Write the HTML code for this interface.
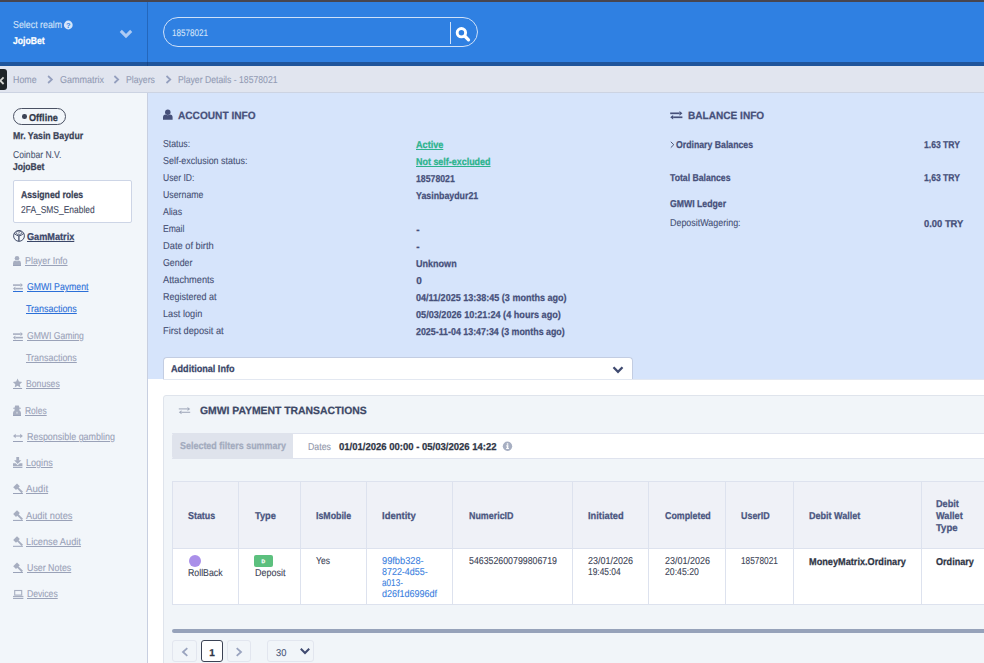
<!DOCTYPE html>
<html lang="en">
<head>
<meta charset="utf-8">
<title>Player Details - 18578021</title>
<style>
html,body{margin:0;padding:0}
body{width:984px;height:663px;overflow:hidden;position:relative;background:#fff;font-family:"Liberation Sans",sans-serif;font-size:10px;color:#4a5578}
.abs,.t,svg.i{position:absolute}
.t{white-space:nowrap;text-rendering:geometricPrecision;transform-origin:0 0;text-decoration-thickness:1px;text-underline-offset:1px}
a.t{cursor:pointer}
.topstrip{left:0;top:0;width:984px;height:2px;background:#47454f}
.header{left:0;top:2px;width:984px;height:60px;background:#2f80e2;border-bottom:4px solid #1f559b}
.hdiv{left:147px;top:2px;width:1px;height:64px;background:rgba(10,40,90,.28)}
.pill{left:163px;top:17px;width:313px;height:28px;border:1px solid #cfe1f9;border-radius:15px}
.pdiv{left:450px;top:22px;width:1px;height:22px;background:#cfe1f9}
.crumbs{left:0;top:66px;width:984px;height:26px;background:#e1e5ef;border-bottom:1px solid #ccd3e2}
.collapse{left:0;top:69px;width:7px;height:21px;background:#1f2428;border-radius:0 3px 3px 0}
.side{left:0;top:93px;width:147px;height:570px;background:#f2f6fa;border-right:1px solid #c8cfe0}
.offline{left:13px;top:108px;width:51px;height:15px;border:1px solid #4a5163;border-radius:9px}
.dot{left:22.1px;top:114.2px;width:4.6px;height:4.6px;border-radius:50%;background:#3b4254}
.roles{left:13px;top:180px;width:117px;height:41px;border:1px solid #cdd5e6;border-radius:2px;background:#fff}
.ul{height:1px}
.acct{left:148px;top:93px;width:836px;height:286px;background:#d6e4fb}
.acctline{left:163px;top:379px;width:821px;height:1px;background:#e3e8f1}
.addl{left:163px;top:357px;width:468px;height:22px;background:#fff;border:1px solid #c3cde2;border-bottom:0;border-radius:4px 4px 0 0}
.panel{left:163px;top:395px;width:840px;height:300px;background:#f1f5f9;border:1px solid #dfe4ec;border-radius:3px}
.fbar{left:172px;top:433px;width:830px;height:24px;background:#fff;border-top:1px solid #dfe3ee;border-bottom:1px solid #dfe3ee}
.flabel{left:172px;top:433px;width:121px;height:26px;background:#dfe3ec;border-radius:3px 0 0 3px}
table.grid{left:172px;top:481px;border-collapse:collapse;table-layout:fixed;width:900px}
table.grid th,table.grid td{border:1px solid #dde2ee;padding:0}
table.grid th{height:66px;background:#eff1f7}
table.grid td{height:55px;background:#fff}
.circle{left:189px;top:554.7px;width:12px;height:12px;border-radius:50%;background:#aa8fe9}
.badge{left:254px;top:555px;width:19px;height:12px;border-radius:2px;background:#5cc07e}
.sbar{left:172px;top:629px;width:830px;height:4px;background:#96a2ba;border-radius:2px}
.pg{top:640px;height:20px;border:1px solid #e2e6ef;border-radius:3px;background:#f1f5f9}
.pg.cur{border-color:#3b4254;background:#fff}
</style>
</head>
<body>
<div class="abs topstrip"></div>
<div class="abs header"></div>
<div class="abs hdiv"></div>
<div class="abs pill"></div>
<div class="abs pdiv"></div>
<div class="abs crumbs"></div>
<div class="abs collapse"></div>
<div class="abs side"></div>
<div class="abs offline"></div><div class="abs dot"></div>
<div class="abs roles"></div>
<div class="abs acct"></div>
<div class="abs addl"></div><div class="abs acctline"></div>
<div class="abs panel"></div>
<div class="abs fbar"></div><div class="abs flabel"></div>
<table class="abs grid">
<colgroup><col style="width:66px"><col style="width:62px"><col style="width:66px"><col style="width:86px"><col style="width:120px"><col style="width:76px"><col style="width:77px"><col style="width:68px"><col style="width:128px"><col style="width:151px"></colgroup>
<tr><th></th><th></th><th></th><th></th><th></th><th></th><th></th><th></th><th></th><th></th></tr>
<tr><td></td><td></td><td></td><td></td><td></td><td></td><td></td><td></td><td></td><td></td></tr>
</table>
<div class="abs circle"></div>
<div class="abs badge"></div>
<div class="abs sbar"></div>
<div class="abs pg" style="left:172px;width:23px"></div>
<div class="abs pg cur" style="left:201px;width:20px"></div>
<div class="abs pg" style="left:227px;width:22px"></div>
<div class="abs pg" style="left:267px;width:45px"></div>
<svg class="i" style="left:0;top:0;pointer-events:none" width="984" height="663" viewBox="0 0 984 663" font-family="Liberation Sans, sans-serif">
<circle cx="68.3" cy="25" r="4.4" fill="#d6e5fa"/><text x="68.3" y="27.6" font-size="7.5" font-weight="700" text-anchor="middle" fill="#2f80e2">?</text>
<polyline points="120.8,30.9 126,36.1 131.2,30.9" fill="none" stroke="#aecbf4" stroke-width="3"/>
<circle cx="461.4" cy="32.7" r="4.2" fill="none" stroke="#fff" stroke-width="2.9"/><line x1="465.2" y1="36.5" x2="468.5" y2="39.8" stroke="#fff" stroke-width="3.2" stroke-linecap="round"/>
<polyline points="3.6,77.4 0.3,80.7 3.6,84" fill="none" stroke="#d5d6d2" stroke-width="1.8"/>
<polyline points="48.1,76 51.9,79.5 48.1,83" fill="none" stroke="#949fbe" stroke-width="1.7"/>
<polyline points="114.4,76 118.2,79.5 114.4,83" fill="none" stroke="#949fbe" stroke-width="1.7"/>
<polyline points="166.5,76 170.3,79.5 166.5,83" fill="none" stroke="#949fbe" stroke-width="1.7"/>
<g fill="none" stroke="#414b68" stroke-width="1"><circle cx="19" cy="235.9" r="5.4"/><ellipse cx="18.9" cy="232.8" rx="2.9" ry="1.7" stroke-width="0.7"/><path d="M18,233.2 L19.8,232.4" stroke-width="0.6"/><path d="M14.1,233.4 Q16.5,235.6 18.9,235.9 Q21.3,235.6 23.8,233.4" stroke-width="1"/><path d="M18.9,235.9 L18.9,241.2" stroke-width="1.3"/></g>
<g fill="#a7aec0"><circle cx="17.00" cy="258.28" r="2.28"/><path d="M13.00,265.60 L13.00,263.30 Q13.00,260.80 15.16,260.61 Q17.00,261.95 18.84,260.61 Q21.00,260.80 21.00,263.30 L21.00,265.60 Z"/></g>
<g fill="#a7aec0" stroke="#a7aec0" stroke-width="1.60"><line x1="13.00" y1="285.08" x2="20.52" y2="285.08"/><line x1="15.38" y1="288.62" x2="22.90" y2="288.62"/><path stroke="none" d="M20.52,283.00 L22.90,285.08 L20.52,287.16 Z M15.38,286.54 L13.00,288.62 L15.38,290.70 Z"/></g>
<g fill="#a7aec0" stroke="#a7aec0" stroke-width="1.60"><line x1="13.00" y1="334.08" x2="20.52" y2="334.08"/><line x1="15.38" y1="337.62" x2="22.90" y2="337.62"/><path stroke="none" d="M20.52,332.00 L22.90,334.08 L20.52,336.16 Z M15.38,335.54 L13.00,337.62 L15.38,339.70 Z"/></g>
<polygon points="17.55,378.60 18.93,381.60 22.21,381.99 19.78,384.23 20.43,387.46 17.55,385.85 14.67,387.46 15.32,384.23 12.89,381.99 16.17,381.60" fill="#a7aec0"/>
<g fill="#a7aec0"><path d="M15.2,405.4 L18.8,405.4 L19.5,407.7 L20.8,407.7 L20.8,408.8 L19.4,408.8 L19.4,410.4 Q21,411 21,413 L21,415.3 L13,415.3 L13,413 Q13,411 14.6,410.4 L14.6,408.8 L13.2,408.8 L13.2,407.7 L14.5,407.7 Z"/><rect x="16.5" y="411.8" width="1" height="1.8" fill="#f2f6fa" opacity=".8"/></g>
<g fill="#a7aec0" stroke="#a7aec0" stroke-width="1.2"><line x1="15" y1="436" x2="21" y2="436"/><path stroke="none" d="M15.7,433.7 L13,436 L15.7,438.3 Z M20.2,433.7 L22.9,436 L20.2,438.3 Z"/></g>
<g fill="#a7aec0"><rect x="16.3" y="457" width="2.8" height="3.6"/><path d="M14.1,460.3 L21.3,460.3 L17.7,463.9 Z"/><path d="M13,463.3 L15.6,463.3 L17.7,465.2 L19.8,463.3 L22.4,463.3 L22.4,466.3 L13,466.3 Z"/></g>
<g stroke="#a7aec0" fill="none"><line x1="14.6" y1="488.6" x2="18.4" y2="484.8" stroke-width="4"/><line x1="17.4" y1="487.6" x2="22.3" y2="492.5" stroke-width="1.9"/></g>
<g stroke="#a7aec0" fill="none"><line x1="14.6" y1="515.5" x2="18.4" y2="511.7" stroke-width="4"/><line x1="17.4" y1="514.5" x2="22.3" y2="519.4" stroke-width="1.9"/></g>
<g stroke="#a7aec0" fill="none"><line x1="14.6" y1="541.4" x2="18.4" y2="537.6" stroke-width="4"/><line x1="17.4" y1="540.4" x2="22.3" y2="545.3" stroke-width="1.9"/></g>
<g stroke="#a7aec0" fill="none"><line x1="14.6" y1="567.6" x2="18.4" y2="563.8" stroke-width="4"/><line x1="17.4" y1="566.6" x2="22.3" y2="571.5" stroke-width="1.9"/></g>
<g><rect x="14.7" y="590.5" width="7" height="4.6" fill="none" stroke="#a7aec0" stroke-width="1.1"/><rect x="13" y="595.9" width="10.4" height="1.2" fill="#a7aec0"/></g>
<g fill="#46507a"><circle cx="167.80" cy="112.24" r="2.74"/><path d="M163.00,119.80 L163.00,117.33 Q163.00,114.65 165.59,114.44 Q167.80,115.89 170.01,114.44 Q172.60,114.65 172.60,117.33 L172.60,119.80 Z"/></g>
<g fill="#46507a" stroke="#46507a" stroke-width="1.70"><line x1="670.20" y1="113.32" x2="679.47" y2="113.32"/><line x1="673.13" y1="117.28" x2="682.40" y2="117.28"/><path stroke="none" d="M679.47,111.00 L682.40,113.32 L679.47,115.64 Z M673.13,114.96 L670.20,117.28 L673.13,119.60 Z"/></g>
<polyline points="670.8,141.8 673.8,144.7 670.8,147.6" fill="none" stroke="#4a5578" stroke-width="1"/>
<polyline points="613.5,367.3 618,371.8 622.5,367.3" fill="none" stroke="#3f4a70" stroke-width="2.3"/>
<g fill="#a3abbd" stroke="#a3abbd" stroke-width="1.10"><line x1="178.80" y1="408.90" x2="187.46" y2="408.90"/><line x1="181.54" y1="412.30" x2="190.20" y2="412.30"/><path stroke="none" d="M187.46,406.90 L190.20,408.90 L187.46,410.90 Z M181.54,410.30 L178.80,412.30 L181.54,414.30 Z"/></g>
<circle cx="507.5" cy="446.2" r="4.7" fill="#a7afc2"/><g fill="#fff"><rect x="506.8" y="443.3" width="1.5" height="1.4"/><rect x="506.2" y="445.4" width="2.1" height="0.9"/><rect x="506.8" y="445.4" width="1.5" height="3.4"/><rect x="506.1" y="448.1" width="2.9" height="0.9"/></g>
<polyline points="187.3,648.2 183,652 187.3,655.8" fill="none" stroke="#9aa4bf" stroke-width="1.8"/>
<polyline points="236.7,648.2 241,652 236.7,655.8" fill="none" stroke="#9aa4bf" stroke-width="1.8"/>
<polyline points="300.8,648.8 305,653 309.2,648.8" fill="none" stroke="#3f4a70" stroke-width="2"/>
<rect x="13" y="265.0" width="8.0" height="1" fill="#9aa2b8"/>
<rect x="13" y="291.0" width="9.9" height="1" fill="#2b6fd8"/>
<rect x="13" y="340.0" width="9.9" height="1" fill="#9aa2b8"/>
<rect x="13" y="388.0" width="9.1" height="1" fill="#9aa2b8"/>
<rect x="13" y="415.0" width="8.0" height="1" fill="#9aa2b8"/>
<rect x="13" y="441.0" width="9.9" height="1" fill="#9aa2b8"/>
<rect x="13" y="466.9" width="9.4" height="1" fill="#9aa2b8"/>
<rect x="13" y="493.0" width="9.9" height="1" fill="#9aa2b8"/>
<rect x="13" y="519.9" width="9.9" height="1" fill="#9aa2b8"/>
<rect x="13" y="545.8" width="9.9" height="1" fill="#9aa2b8"/>
<rect x="13" y="572.0" width="9.9" height="1" fill="#9aa2b8"/>
<rect x="13" y="597.9" width="10.4" height="1" fill="#9aa2b8"/>
</svg>
<span class="t" style="left:12.7px;top:19.8px;font-size:10px;line-height:11px;color:#d6e5fa;transform:scaleX(0.885);-webkit-text-stroke:0.1px;">Select realm</span>
<span class="t" style="left:12.7px;top:35.8px;font-size:10px;line-height:11px;color:#ffffff;transform:scaleX(0.864);font-weight:700;-webkit-text-stroke:0.25px;">JojoBet</span>
<span class="t" style="left:171.7px;top:27.9px;font-size:9.5px;line-height:11px;color:#d2e2f9;transform:scaleX(0.851);-webkit-text-stroke:0.1px;">18578021</span>
<a class="t" style="left:13.1px;top:75.0px;font-size:10px;line-height:11px;color:#929bb4;transform:scaleX(0.884);-webkit-text-stroke:0.1px;">Home</a>
<a class="t" style="left:59.6px;top:75.0px;font-size:10px;line-height:11px;color:#929bb4;transform:scaleX(0.902);-webkit-text-stroke:0.1px;">Gammatrix</a>
<a class="t" style="left:126.1px;top:75.0px;font-size:10px;line-height:11px;color:#929bb4;transform:scaleX(0.866);-webkit-text-stroke:0.1px;">Players</a>
<span class="t" style="left:177.9px;top:75.0px;font-size:10px;line-height:11px;color:#929bb4;transform:scaleX(0.865);-webkit-text-stroke:0.1px;">Player Details - 18578021</span>
<span class="t" style="left:29.1px;top:112.6px;font-size:10px;line-height:11px;color:#2f3648;transform:scaleX(0.909);font-weight:700;-webkit-text-stroke:0.25px;">Offline</span>
<span class="t" style="left:13.1px;top:130.9px;font-size:10px;line-height:11px;color:#3a4256;transform:scaleX(0.872);font-weight:700;-webkit-text-stroke:0.25px;">Mr. Yasin Baydur</span>
<span class="t" style="left:13.1px;top:149.9px;font-size:10px;line-height:11px;color:#4a5570;transform:scaleX(0.857);-webkit-text-stroke:0.1px;">Coinbar N.V.</span>
<span class="t" style="left:13.1px;top:161.8px;font-size:10px;line-height:11px;color:#3a4256;transform:scaleX(0.854);font-weight:700;-webkit-text-stroke:0.25px;">JojoBet</span>
<span class="t" style="left:21.3px;top:189.9px;font-size:10px;line-height:11px;color:#3a4256;transform:scaleX(0.867);font-weight:700;-webkit-text-stroke:0.25px;">Assigned roles</span>
<span class="t" style="left:21.3px;top:204.8px;font-size:10px;line-height:11px;color:#3f4860;transform:scaleX(0.844);-webkit-text-stroke:0.1px;">2FA_SMS_Enabled</span>
<a class="t" style="left:27.1px;top:231.8px;font-size:10px;line-height:11px;color:#3a4668;transform:scaleX(0.915);font-weight:700;-webkit-text-stroke:0.25px;text-decoration:underline;">GamMatrix</a>
<a class="t" style="left:25.0px;top:256.0px;font-size:10px;line-height:11px;color:#9aa2b8;transform:scaleX(0.890);-webkit-text-stroke:0.1px;text-decoration:underline;">Player Info</a>
<a class="t" style="left:27.0px;top:282.0px;font-size:10px;line-height:11px;color:#2b6fd8;transform:scaleX(0.871);-webkit-text-stroke:0.1px;text-decoration:underline;">GMWI Payment</a>
<a class="t" style="left:25.9px;top:303.8px;font-size:10px;line-height:11px;color:#2b6fd8;transform:scaleX(0.893);-webkit-text-stroke:0.1px;text-decoration:underline;">Transactions</a>
<a class="t" style="left:27.0px;top:331.0px;font-size:10px;line-height:11px;color:#9aa2b8;transform:scaleX(0.860);-webkit-text-stroke:0.1px;text-decoration:underline;">GMWI Gaming</a>
<a class="t" style="left:25.9px;top:352.9px;font-size:10px;line-height:11px;color:#9aa2b8;transform:scaleX(0.893);-webkit-text-stroke:0.1px;text-decoration:underline;">Transactions</a>
<a class="t" style="left:25.9px;top:379.0px;font-size:10px;line-height:11px;color:#9aa2b8;transform:scaleX(0.868);-webkit-text-stroke:0.1px;text-decoration:underline;">Bonuses</a>
<a class="t" style="left:25.2px;top:406.0px;font-size:10px;line-height:11px;color:#9aa2b8;transform:scaleX(0.848);-webkit-text-stroke:0.1px;text-decoration:underline;">Roles</a>
<a class="t" style="left:27.0px;top:432.0px;font-size:10px;line-height:11px;color:#9aa2b8;transform:scaleX(0.893);-webkit-text-stroke:0.1px;text-decoration:underline;">Responsible gambling</a>
<a class="t" style="left:25.9px;top:457.9px;font-size:10px;line-height:11px;color:#9aa2b8;transform:scaleX(0.906);-webkit-text-stroke:0.1px;text-decoration:underline;">Logins</a>
<a class="t" style="left:26.4px;top:484.0px;font-size:10px;line-height:11px;color:#9aa2b8;transform:scaleX(0.969);-webkit-text-stroke:0.1px;text-decoration:underline;">Audit</a>
<a class="t" style="left:26.4px;top:510.9px;font-size:10px;line-height:11px;color:#9aa2b8;transform:scaleX(0.929);-webkit-text-stroke:0.1px;text-decoration:underline;">Audit notes</a>
<a class="t" style="left:26.4px;top:536.8px;font-size:10px;line-height:11px;color:#9aa2b8;transform:scaleX(0.923);-webkit-text-stroke:0.1px;text-decoration:underline;">License Audit</a>
<a class="t" style="left:26.5px;top:563.0px;font-size:10px;line-height:11px;color:#9aa2b8;transform:scaleX(0.884);-webkit-text-stroke:0.1px;text-decoration:underline;">User Notes</a>
<a class="t" style="left:27.3px;top:588.9px;font-size:10px;line-height:11px;color:#9aa2b8;transform:scaleX(0.863);-webkit-text-stroke:0.1px;text-decoration:underline;">Devices</a>
<span class="t" style="left:178.4px;top:110.0px;font-size:10.5px;line-height:12px;color:#46507a;transform:scaleX(0.964);font-weight:700;-webkit-text-stroke:0.25px;">ACCOUNT INFO</span>
<span class="t" style="left:688.4px;top:110.0px;font-size:10.5px;line-height:12px;color:#46507a;transform:scaleX(0.960);font-weight:700;-webkit-text-stroke:0.25px;">BALANCE INFO</span>
<span class="t" style="left:163.0px;top:139.0px;font-size:10px;line-height:11px;color:#454f73;transform:scaleX(0.870);-webkit-text-stroke:0.1px;">Status:</span>
<span class="t" style="left:163.0px;top:156.0px;font-size:10px;line-height:11px;color:#454f73;transform:scaleX(0.893);-webkit-text-stroke:0.1px;">Self-exclusion status:</span>
<span class="t" style="left:163.0px;top:173.0px;font-size:10px;line-height:11px;color:#454f73;transform:scaleX(0.854);-webkit-text-stroke:0.1px;">User ID:</span>
<span class="t" style="left:163.0px;top:190.0px;font-size:10px;line-height:11px;color:#454f73;transform:scaleX(0.878);-webkit-text-stroke:0.1px;">Username</span>
<span class="t" style="left:163.0px;top:207.0px;font-size:10px;line-height:11px;color:#454f73;transform:scaleX(0.881);-webkit-text-stroke:0.1px;">Alias</span>
<span class="t" style="left:163.0px;top:224.0px;font-size:10px;line-height:11px;color:#454f73;transform:scaleX(0.855);-webkit-text-stroke:0.1px;">Email</span>
<span class="t" style="left:163.0px;top:241.0px;font-size:10px;line-height:11px;color:#454f73;transform:scaleX(0.931);-webkit-text-stroke:0.1px;">Date of birth</span>
<span class="t" style="left:163.0px;top:258.0px;font-size:10px;line-height:11px;color:#454f73;transform:scaleX(0.881);-webkit-text-stroke:0.1px;">Gender</span>
<span class="t" style="left:163.0px;top:275.0px;font-size:10px;line-height:11px;color:#454f73;transform:scaleX(0.921);-webkit-text-stroke:0.1px;">Attachments</span>
<span class="t" style="left:163.0px;top:292.0px;font-size:10px;line-height:11px;color:#454f73;transform:scaleX(0.898);-webkit-text-stroke:0.1px;">Registered at</span>
<span class="t" style="left:163.0px;top:309.0px;font-size:10px;line-height:11px;color:#454f73;transform:scaleX(0.918);-webkit-text-stroke:0.1px;">Last login</span>
<span class="t" style="left:163.0px;top:326.0px;font-size:10px;line-height:11px;color:#454f73;transform:scaleX(0.924);-webkit-text-stroke:0.1px;">First deposit at</span>
<a class="t" style="left:416.2px;top:140.0px;font-size:10px;line-height:11px;color:#2bb38d;transform:scaleX(0.910);font-weight:700;-webkit-text-stroke:0.25px;text-decoration:underline;">Active</a>
<a class="t" style="left:416.2px;top:157.0px;font-size:10px;line-height:11px;color:#2bb38d;transform:scaleX(0.894);font-weight:700;-webkit-text-stroke:0.25px;text-decoration:underline;">Not self-excluded</a>
<span class="t" style="left:416.2px;top:174.0px;font-size:10px;line-height:11px;color:#46507a;transform:scaleX(0.872);font-weight:700;-webkit-text-stroke:0.25px;">18578021</span>
<span class="t" style="left:416.2px;top:191.0px;font-size:10px;line-height:11px;color:#46507a;transform:scaleX(0.881);font-weight:700;-webkit-text-stroke:0.25px;">Yasinbaydur21</span>
<span class="t" style="left:416.2px;top:225.0px;font-size:10px;line-height:11px;color:#46507a;font-weight:700;-webkit-text-stroke:0.25px;">-</span>
<span class="t" style="left:416.2px;top:242.0px;font-size:10px;line-height:11px;color:#46507a;font-weight:700;-webkit-text-stroke:0.25px;">-</span>
<span class="t" style="left:416.2px;top:259.0px;font-size:10px;line-height:11px;color:#46507a;transform:scaleX(0.904);font-weight:700;-webkit-text-stroke:0.25px;">Unknown</span>
<span class="t" style="left:416.2px;top:276.0px;font-size:10px;line-height:11px;color:#46507a;font-weight:700;-webkit-text-stroke:0.25px;">0</span>
<span class="t" style="left:416.2px;top:293.0px;font-size:10px;line-height:11px;color:#46507a;transform:scaleX(0.903);font-weight:700;-webkit-text-stroke:0.25px;">04/11/2025 13:38:45 (3 months ago)</span>
<span class="t" style="left:416.2px;top:310.0px;font-size:10px;line-height:11px;color:#46507a;transform:scaleX(0.911);font-weight:700;-webkit-text-stroke:0.25px;">05/03/2026 10:21:24 (4 hours ago)</span>
<span class="t" style="left:416.2px;top:327.0px;font-size:10px;line-height:11px;color:#46507a;transform:scaleX(0.886);font-weight:700;-webkit-text-stroke:0.25px;">2025-11-04 13:47:34 (3 months ago)</span>
<span class="t" style="left:676.0px;top:140.0px;font-size:10px;line-height:11px;color:#46507a;transform:scaleX(0.872);font-weight:700;-webkit-text-stroke:0.25px;">Ordinary Balances</span>
<span class="t" style="left:670.4px;top:173.0px;font-size:10px;line-height:11px;color:#46507a;transform:scaleX(0.866);font-weight:700;-webkit-text-stroke:0.25px;">Total Balances</span>
<span class="t" style="left:670.4px;top:199.0px;font-size:10px;line-height:11px;color:#46507a;transform:scaleX(0.870);font-weight:700;-webkit-text-stroke:0.25px;">GMWI Ledger</span>
<span class="t" style="left:670.4px;top:218.0px;font-size:10px;line-height:11px;color:#454f73;transform:scaleX(0.892);-webkit-text-stroke:0.1px;">DepositWagering:</span>
<span class="t" style="left:924.0px;top:140.0px;font-size:10px;line-height:11px;color:#46507a;transform:scaleX(0.857);font-weight:700;-webkit-text-stroke:0.25px;">1.63 TRY</span>
<span class="t" style="left:924.0px;top:173.0px;font-size:10px;line-height:11px;color:#46507a;transform:scaleX(0.857);font-weight:700;-webkit-text-stroke:0.25px;">1,63 TRY</span>
<span class="t" style="left:924.0px;top:219.0px;font-size:10px;line-height:11px;color:#46507a;transform:scaleX(0.939);font-weight:700;-webkit-text-stroke:0.25px;">0.00 TRY</span>
<span class="t" style="left:171.3px;top:364.0px;font-size:10px;line-height:11px;color:#3a4668;transform:scaleX(0.907);font-weight:700;-webkit-text-stroke:0.25px;">Additional Info</span>
<span class="t" style="left:199.6px;top:405.2px;font-size:10.5px;line-height:12px;color:#3d4866;transform:scaleX(0.989);font-weight:700;-webkit-text-stroke:0.25px;">GMWI PAYMENT TRANSACTIONS</span>
<span class="t" style="left:179.5px;top:441.3px;font-size:10px;line-height:11px;color:#a3abbe;transform:scaleX(0.895);font-weight:700;-webkit-text-stroke:0.25px;">Selected filters summary</span>
<span class="t" style="left:308.2px;top:442.0px;font-size:10px;line-height:11px;color:#8f96aa;transform:scaleX(0.877);-webkit-text-stroke:0.1px;">Dates</span>
<span class="t" style="left:338.8px;top:442.0px;font-size:10px;line-height:11px;color:#2f3545;transform:scaleX(0.951);font-weight:700;-webkit-text-stroke:0.25px;">01/01/2026 00:00 - 05/03/2026 14:22</span>
<span class="t" style="left:188.4px;top:511.0px;font-size:10px;line-height:11px;color:#4a5580;transform:scaleX(0.890);font-weight:700;-webkit-text-stroke:0.25px;">Status</span>
<span class="t" style="left:254.5px;top:511.0px;font-size:10px;line-height:11px;color:#4a5580;transform:scaleX(0.924);font-weight:700;-webkit-text-stroke:0.25px;">Type</span>
<span class="t" style="left:316.0px;top:511.0px;font-size:10px;line-height:11px;color:#4a5580;transform:scaleX(0.880);font-weight:700;-webkit-text-stroke:0.25px;">IsMobile</span>
<span class="t" style="left:382.3px;top:511.0px;font-size:10px;line-height:11px;color:#4a5580;transform:scaleX(0.948);font-weight:700;-webkit-text-stroke:0.25px;">Identity</span>
<span class="t" style="left:468.7px;top:511.0px;font-size:10px;line-height:11px;color:#4a5580;transform:scaleX(0.890);font-weight:700;-webkit-text-stroke:0.25px;">NumericID</span>
<span class="t" style="left:588.4px;top:511.0px;font-size:10px;line-height:11px;color:#4a5580;transform:scaleX(0.928);font-weight:700;-webkit-text-stroke:0.25px;">Initiated</span>
<span class="t" style="left:664.6px;top:511.0px;font-size:10px;line-height:11px;color:#4a5580;transform:scaleX(0.886);font-weight:700;-webkit-text-stroke:0.25px;">Completed</span>
<span class="t" style="left:741.3px;top:511.0px;font-size:10px;line-height:11px;color:#4a5580;transform:scaleX(0.890);font-weight:700;-webkit-text-stroke:0.25px;">UserID</span>
<span class="t" style="left:808.9px;top:511.0px;font-size:10px;line-height:11px;color:#4a5580;transform:scaleX(0.902);font-weight:700;-webkit-text-stroke:0.25px;">Debit Wallet</span>
<span class="t" style="left:936.4px;top:498.7px;font-size:10px;line-height:11px;color:#4a5580;transform:scaleX(0.916);font-weight:700;-webkit-text-stroke:0.25px;">Debit</span>
<span class="t" style="left:936.4px;top:510.8px;font-size:10px;line-height:11px;color:#4a5580;transform:scaleX(0.918);font-weight:700;-webkit-text-stroke:0.25px;">Wallet</span>
<span class="t" style="left:936.4px;top:522.8px;font-size:10px;line-height:11px;color:#4a5580;transform:scaleX(0.955);font-weight:700;-webkit-text-stroke:0.25px;">Type</span>
<span class="t" style="left:188.4px;top:567.8px;font-size:10px;line-height:11px;color:#3b4254;transform:scaleX(0.877);-webkit-text-stroke:0.1px;">RollBack</span>
<span class="t" style="left:254.5px;top:567.8px;font-size:10px;line-height:11px;color:#3b4254;transform:scaleX(0.897);-webkit-text-stroke:0.1px;">Deposit</span>
<span class="t" style="left:261.5px;top:559.2px;font-size:5px;line-height:6px;color:#ffffff;font-weight:700;-webkit-text-stroke:0.25px;">D</span>
<span class="t" style="left:316.0px;top:555.9px;font-size:10px;line-height:11px;color:#3b4254;transform:scaleX(0.851);-webkit-text-stroke:0.1px;">Yes</span>
<a class="t" style="left:382.3px;top:555.9px;font-size:10px;line-height:11px;color:#3a80e0;transform:scaleX(0.926);-webkit-text-stroke:0.1px;">99fbb328-</a>
<a class="t" style="left:382.3px;top:566.9px;font-size:10px;line-height:11px;color:#3a80e0;transform:scaleX(0.893);-webkit-text-stroke:0.1px;">8722-4d55-</a>
<a class="t" style="left:382.3px;top:577.9px;font-size:10px;line-height:11px;color:#3a80e0;transform:scaleX(0.817);-webkit-text-stroke:0.1px;">a013-</a>
<a class="t" style="left:382.3px;top:588.9px;font-size:10px;line-height:11px;color:#3a80e0;transform:scaleX(0.901);-webkit-text-stroke:0.1px;">d26f1d6996df</a>
<span class="t" style="left:468.7px;top:555.9px;font-size:10px;line-height:11px;color:#3b4254;transform:scaleX(0.879);-webkit-text-stroke:0.1px;">546352600799806719</span>
<span class="t" style="left:588.4px;top:555.9px;font-size:10px;line-height:11px;color:#3b4254;transform:scaleX(0.897);-webkit-text-stroke:0.1px;">23/01/2026</span>
<span class="t" style="left:588.4px;top:566.9px;font-size:10px;line-height:11px;color:#3b4254;transform:scaleX(0.840);-webkit-text-stroke:0.1px;">19:45:04</span>
<span class="t" style="left:664.6px;top:555.9px;font-size:10px;line-height:11px;color:#3b4254;transform:scaleX(0.897);-webkit-text-stroke:0.1px;">23/01/2026</span>
<span class="t" style="left:664.6px;top:566.9px;font-size:10px;line-height:11px;color:#3b4254;transform:scaleX(0.868);-webkit-text-stroke:0.1px;">20:45:20</span>
<span class="t" style="left:741.3px;top:556.0px;font-size:10px;line-height:11px;color:#3b4254;transform:scaleX(0.829);-webkit-text-stroke:0.1px;">18578021</span>
<span class="t" style="left:808.9px;top:557.0px;font-size:10px;line-height:11px;color:#2f3545;transform:scaleX(0.917);font-weight:700;-webkit-text-stroke:0.25px;">MoneyMatrix.Ordinary</span>
<span class="t" style="left:936.4px;top:557.0px;font-size:10px;line-height:11px;color:#2f3545;transform:scaleX(0.909);font-weight:700;-webkit-text-stroke:0.25px;">Ordinary</span>
<span class="t" style="left:209.3px;top:648.0px;font-size:10px;line-height:11px;color:#2f3545;font-weight:700;-webkit-text-stroke:0.25px;">1</span>
<span class="t" style="left:276.1px;top:648.0px;font-size:10px;line-height:11px;color:#4a5578;transform:scaleX(0.935);-webkit-text-stroke:0.1px;">30</span>
</body>
</html>
